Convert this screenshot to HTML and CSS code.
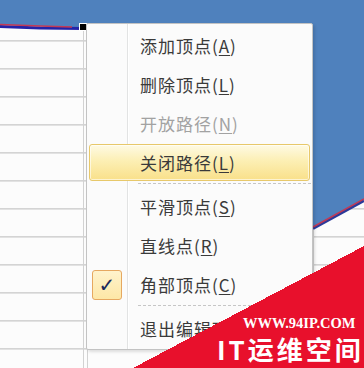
FILE: index.html
```html
<!DOCTYPE html>
<html lang="zh-CN">
<head>
<meta charset="utf-8">
<link rel="stylesheet" href="styles.css">
</head>
<body>
<div class="stage">
  <div class="sheet"></div>
  <svg class="shape" width="364" height="368" viewBox="0 0 364 368" xmlns="http://www.w3.org/2000/svg">
    <path d="M0 0 L364 0 L364 199 L313 227 L313 26 L83 27.5 L40 26.5 L0 25 Z" fill="#4f81bd"/>
    <polyline points="0,26.5 40,28 83,28.5" fill="none" stroke="#2323a8" stroke-width="3"/>
    <polyline points="0,24.5 40,26 72,27" fill="none" stroke="#c23a55" stroke-width="1.3"/>
    <line x1="313" y1="228.5" x2="364" y2="200.5" stroke="#2a3a9a" stroke-width="3"/>
    <line x1="313" y1="227" x2="364" y2="199" stroke="#c23a55" stroke-width="1.5"/>
    <rect x="79.5" y="23.5" width="7" height="7" fill="#000000" stroke="#ffffff" stroke-width="1"/>
  </svg>

  <div class="menu">
    <div class="item"><span class="icon"></span><span class="label">添加顶点(<u>A</u>)</span></div>
    <div class="item"><span class="icon"></span><span class="label">删除顶点(<u>L</u>)</span></div>
    <div class="item disabled"><span class="icon"></span><span class="label">开放路径(<u>N</u>)</span></div>
    <div class="item hover"><span class="icon"></span><span class="label">关闭路径(<u>L</u>)</span></div>
    <div class="sep"></div>
    <div class="item"><span class="icon"></span><span class="label">平滑顶点(<u>S</u>)</span></div>
    <div class="item"><span class="icon"></span><span class="label">直线点(<u>R</u>)</span></div>
    <div class="item"><span class="icon check">✓</span><span class="label">角部顶点(<u>C</u>)</span></div>
    <div class="sep"></div>
    <div class="item"><span class="icon"></span><span class="label">退出编辑顶点(<u>E</u>)</span></div>
  </div>

  <div class="watermark">
    <div class="wm-bg"></div>
    <div class="wm-url">WWW.94IP.COM</div>
    <div class="wm-name">IT运维空间</div>
  </div>
</div>
</body>
</html>
```

FILE: styles.css
```css
html, body {
  margin: 0;
  padding: 0;
}
body {
  width: 364px;
  height: 368px;
  overflow: hidden;
  background: #fcfcfc;
}
.stage {
  position: relative;
  width: 364px;
  height: 368px;
  overflow: hidden;
}
.sheet {
  position: absolute;
  left: 0;
  top: 0;
  width: 364px;
  height: 368px;
  background-color: #fcfcfc;
  background-image:
    linear-gradient(to right, transparent 83px, #d2d2d2 83px, #d2d2d2 84px, transparent 84px,
                    transparent 87px, #d2d2d2 87px, #d2d2d2 88px, transparent 88px,
                    transparent 313px, #d2d2d2 313px, #d2d2d2 314px, transparent 314px),
    linear-gradient(to bottom, transparent 12px, #d4d4d4 12px, #d4d4d4 13px, #e2e2e2 13px, #e2e2e2 14px, transparent 14px);
  background-size: 364px 368px, 364px 28px;
  background-position: 0 0, 0 0;
  background-repeat: no-repeat, repeat-y;
}
.shape {
  position: absolute;
  left: 0;
  top: 0;
  display: block;
}
.menu {
  position: absolute;
  left: 86px;
  top: 23px;
  width: 227px;
  height: 327px;
  box-sizing: border-box;
  border: 1px solid #c3c3c3;
  border-radius: 2px;
  padding: 2px 0 1px;
  display: flex;
  flex-direction: column;
  background:
    linear-gradient(to right, transparent 40px, #e2e3e3 40px, #e2e3e3 41px, #ffffff 41px, #ffffff 42px, transparent 42px),
    #fbfbfb;
  box-shadow: 2px 2px 3px rgba(0,0,0,0.12);
  font-family: "Noto Sans CJK SC", "Noto Sans", sans-serif;
  font-size: 17px;
  color: #3a3a3a;
}
.item {
  display: flex;
  align-items: center;
  height: 37px;
  box-sizing: border-box;
  margin: 1px 2px;
  padding-left: 2px;
  border: 1px solid transparent;
  border-radius: 3px;
  flex: none;
}
.item.disabled {
  color: #a2a2a2;
}
.item.hover {
  border-color: #e7c86a;
  background: linear-gradient(to bottom, #fefae4 0%, #fcefb4 45%, #f9e08a 100%);
  box-shadow: inset 0 0 0 1px rgba(255,255,255,0.6);
}
.icon {
  width: 30px;
  height: 30px;
  margin-right: 18px;
  flex: none;
  box-sizing: border-box;
}
.icon.check {
  border: 1px solid #e6a860;
  border-radius: 3px;
  background: linear-gradient(to bottom, #fff3cc, #fde7a6);
  color: #1c2a5c;
  font-family: "DejaVu Sans", sans-serif;
  font-size: 20px;
  line-height: 28px;
  text-align: center;
  font-weight: bold;
}
.label {
  white-space: nowrap;
  letter-spacing: 1px;
}
.label u {
  text-underline-offset: 2px;
}
.sep {
  height: 5px;
  flex: none;
  margin-left: 51px;
  background: repeating-linear-gradient(to right, #c6c6c6 0, #c6c6c6 3px, transparent 3px, transparent 5px) 0 1px / 100% 1px no-repeat;
}
.watermark {
  position: absolute;
  left: 0;
  top: 0;
  width: 364px;
  height: 368px;
  pointer-events: none;
}
.wm-bg {
  position: absolute;
  left: 0;
  top: 0;
  width: 364px;
  height: 368px;
  background: linear-gradient(to bottom right, transparent 50%, #e8102c 50%) 133px 246px / 231px 122px no-repeat;
}
.wm-url {
  position: absolute;
  left: 243px;
  top: 316px;
  font-family: "Liberation Serif", serif;
  font-weight: bold;
  font-size: 14.5px;
  line-height: 14px;
  color: #ffffff;
}
.wm-name {
  position: absolute;
  left: 217px;
  top: 335px;
  font-family: "Noto Sans CJK SC", sans-serif;
  font-weight: bold;
  font-size: 26px;
  line-height: 28px;
  color: #ffffff;
  letter-spacing: 3px;
  white-space: nowrap;
}
```
